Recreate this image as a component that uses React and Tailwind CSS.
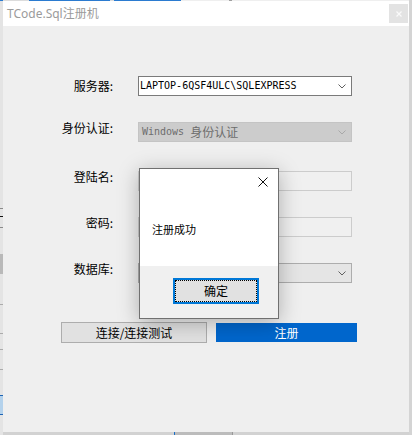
import React from "react";

const Chevron = ({ color = "#606060" }) => (
  <svg width="8" height="5" viewBox="0 0 8 5">
    <polyline points="0.5,0.5 4,4 7.5,0.5" fill="none" stroke={color} strokeWidth="1" />
  </svg>
);

const Label = ({ children, shift }) => (
  <div
    className={
      "w-[110px] shrink-0 text-right text-[12px] leading-[20px] text-black font-['Noto_Sans_CJK_SC',sans-serif] " +
      (shift ? "-mt-[4px]" : "")
    }
  >
    {children}
  </div>
);

const LeftStrip = () => (
  <div className="w-[3px] h-[435px] flex flex-col shrink-0 bg-[#e4e4e4]">
    <div className="h-[1px] bg-[#2b7bd0]" />
    <div className="h-[207px]" />
    <div className="h-[1px] bg-[#8a8a8a]" />
    <div className="h-[7px]" />
    <div className="h-[1px] bg-[#111111]" />
    <div className="h-[10px]" />
    <div className="h-[1px] bg-[#8a8a8a]" />
    <div className="h-[26px]" />
    <div className="h-[20px] bg-[#b9b9b9]" />
    <div className="h-[30px]" />
    <div className="h-[1px] bg-[#ababab]" />
    <div className="h-[28px]" />
    <div className="h-[1px] bg-[#ababab]" />
    <div className="h-[15px]" />
    <div className="h-[1px] bg-[#ababab]" />
    <div className="h-[19px]" />
    <div className="h-[1px] bg-[#ababab]" />
    <div className="h-[25px]" />
    <div className="h-[1px] bg-[#1e64b4]" />
    <div className="h-[18px] bg-[#b4d2ec]" />
    <div className="h-[1px] bg-[#1e64b4]" />
  </div>
);

export default function App() {
  return (
    <div className="w-[412px] h-[435px] flex overflow-hidden bg-[#e4e4e4]">
      <LeftStrip />
      <div className="w-[406px] flex flex-col shrink-0">
        {/* top sliver of desktop behind */}
        <div className="h-[1px] flex">
          <div className="w-[26px] bg-[#dcdcdc]" />
          <div className="w-[81px] bg-[#2b7bd0]" />
          <div className="w-[4px] bg-[#dcdcdc]" />
          <div className="w-[67px] bg-[#2b7bd0]" />
          <div className="w-[48px] bg-[#efefef]" />
          <div className="w-[3px] bg-[#a0a0a0]" />
          <div className="flex-1 bg-[#efefef]" />
        </div>

        {/* window */}
        <div className="relative h-[431px] flex flex-col bg-[#efefef]">
          {/* title bar */}
          <div className="h-[25px] bg-white flex items-center justify-between pl-[4px] pr-[1px]">
            <span className="text-[12px] text-[#9b9b9b] font-['Noto_Sans','Noto_Sans_CJK_SC',sans-serif] leading-none">
              TCode.Sql注册机
            </span>
            <div className="w-[19px] h-[19px] bg-[#e3e3e3] flex items-center justify-center">
              <svg width="6" height="6" viewBox="0 0 6 6">
                <path d="M0.5 0.5 L5.5 5.5 M5.5 0.5 L0.5 5.5" stroke="#fafafa" strokeWidth="1.2" />
              </svg>
            </div>
          </div>

          {/* body */}
          <div className="flex-1 flex flex-col pt-[50px]">
            {/* 服务器 */}
            <div className="flex items-start">
              <Label>服务器:</Label>
              <div className="ml-[25px] w-[214px] h-[20px] bg-white border border-[#7a7a7a] flex items-center justify-between pl-[1px] pr-[5px]">
                <span className="text-[10px] leading-none text-black font-['DejaVu_Sans_Mono',monospace]">
                  LAPTOP-6QSF4ULC\SQLEXPRESS
                </span>
                <Chevron />
              </div>
            </div>

            {/* 身份认证 */}
            <div className="flex items-start mt-[26px]">
              <Label shift>身份认证:</Label>
              <div className="ml-[25px] w-[214px] h-[20px] bg-[#cccccc] border border-[#c4c4c4] flex items-center justify-between pl-[3px] pr-[5px]">
                <span className="flex items-center leading-none text-[#6d6d6d]">
                  <span className="text-[10px] font-['DejaVu_Sans_Mono',monospace] whitespace-pre">Windows </span>
                  <span className="text-[12px] font-['Noto_Sans_CJK_SC',sans-serif]">身份认证</span>
                </span>
                <Chevron color="#a8a8a8" />
              </div>
            </div>

            {/* 登陆名 */}
            <div className="flex items-start mt-[29px]">
              <Label shift>登陆名:</Label>
              <div className="ml-[25px] w-[214px] h-[20px] bg-[#f0f0f0] border border-[#cccccc]" />
            </div>

            {/* 密码 */}
            <div className="flex items-start mt-[26px]">
              <Label shift>密码:</Label>
              <div className="ml-[25px] w-[214px] h-[20px] bg-[#f0f0f0] border border-[#cccccc]" />
            </div>

            {/* 数据库 */}
            <div className="flex items-start mt-[26px]">
              <Label shift>数据库:</Label>
              <div className="ml-[25px] w-[214px] h-[20px] bg-[#e5e5e5] border border-[#adadad] flex items-center justify-end pr-[5px]">
                <Chevron />
              </div>
            </div>

            {/* buttons */}
            <div className="flex items-center mt-[39px] ml-[58px] gap-[9px]">
              <div className="w-[146px] h-[21px] bg-[#e1e1e1] border border-[#adadad] flex items-center justify-center text-[12px] text-black font-['Noto_Sans_CJK_SC',sans-serif] leading-none">
                连接/连接测试
              </div>
              <div className="w-[141px] h-[19px] bg-[#0066cc] flex items-center justify-center text-[12px] text-white font-['Noto_Sans_CJK_SC',sans-serif] leading-none">
                注册
              </div>
            </div>
          </div>

          {/* message box */}
          <div className="absolute left-[136px] top-[167px] w-[140px] h-[151px] border border-[#707070] bg-[#f0f0f0] shadow-[0_4px_20px_rgba(0,0,0,0.28)] flex flex-col">
            <div className="h-[97px] bg-white flex flex-col">
              <div className="flex justify-end pt-[8px] pr-[10px]">
                <svg width="10" height="10" viewBox="0 0 10 10">
                  <path d="M0.5 0.5 L9.5 9.5 M9.5 0.5 L0.5 9.5" stroke="#111111" strokeWidth="1" />
                </svg>
              </div>
              <div className="mt-[35px] pl-[12px] text-[11px] leading-[14px] text-black font-['Noto_Sans_CJK_SC',sans-serif]">
                注册成功
              </div>
            </div>
            <div className="flex-1 pl-[33px] pt-[12px]">
              <div className="w-[86px] h-[26px] border-2 border-[#0078d7] bg-[#e1e1e1]">
                <div className="w-full h-full border border-dotted border-black flex items-center justify-center text-[12px] leading-none text-black font-['Noto_Sans_CJK_SC',sans-serif]">
                  确定
                </div>
              </div>
            </div>
          </div>
        </div>

        {/* bottom sliver */}
        <div className="h-[3px] flex">
          <div className="w-[171px] bg-[#d2d2d2]" />
          <div className="w-[1px] bg-[#1a6fc8]" />
          <div className="w-[57px] bg-[#bcbcbc]" />
          <div className="w-[1px] bg-[#999999]" />
          <div className="flex-1 bg-[#d2d2d2]" />
        </div>
      </div>
      <div className="w-[3px] h-[435px] bg-[#d4d4d4] shrink-0" />
    </div>
  );
}
